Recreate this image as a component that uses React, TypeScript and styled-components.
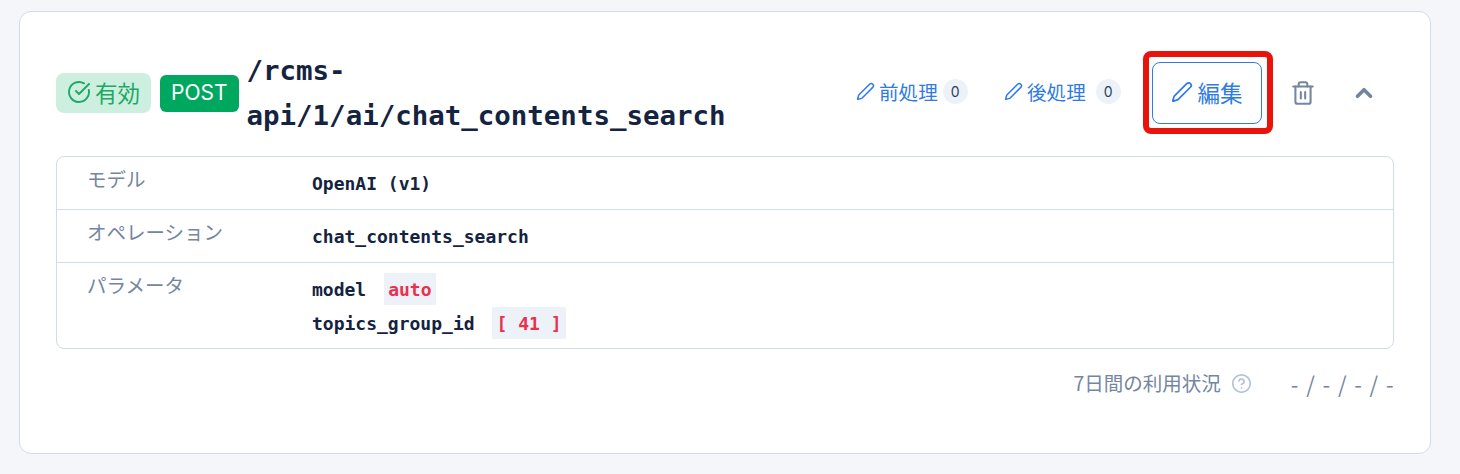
import { FunctionComponent, ReactNode } from "react";
import styled, { createGlobalStyle } from "styled-components";
import { ChevronUp, CircleCheckBig, CircleHelp, Pen, Trash2 } from "lucide-react";

const GlobalStyle = createGlobalStyle`
  html, body {
    margin: 0;
    padding: 0;
    background: #f5f6fa;
    font-family: "Noto Sans CJK JP", "Noto Sans", sans-serif;
  }
`;

const mono = `"DejaVu Sans Mono", "Noto Sans CJK JP", monospace`;

const Page = styled.div`
  width: 1460px;
  height: 474px;
  box-sizing: border-box;
  padding: 11px 29px 20px 19px;
  overflow: hidden;
`;
const Card = styled.section`
  box-sizing: border-box;
  height: 443px;
  background: #fff;
  border: 1px solid #d2dbe9;
  border-radius: 12px;
  padding: 35px 36px 0;
`;
const Header = styled.header`
  display: flex;
  align-items: center;
  height: 92px;
  margin-bottom: 17px;
`;
const StatusBadge = styled.span`
  display: flex;
  align-items: center;
  gap: 4px;
  height: 40px;
  box-sizing: border-box;
  padding: 0 11px 2px;
  border-radius: 8px;
  background: #ccefe0;
  color: #1ea866;
  font-size: 22.5px;
`;
const MethodBadge = styled.span`
  display: flex;
  align-items: center;
  height: 37px;
  box-sizing: border-box;
  margin-left: 9px;
  padding: 0 11px 2px;
  border-radius: 6px;
  background: #00a85f;
  color: #fff;
  font-family: Inter, sans-serif;
  font-size: 21px;
`;
const Title = styled.h2`
  width: 500px;
  margin: 0 0 0 8px;
  color: #14233f;
  font-family: ${mono};
  font-size: 27.45px;
  font-weight: 600;
  line-height: 45px;
`;
const Actions = styled.div`
  display: flex;
  align-items: center;
  margin-left: auto;
  padding-right: 17px;
`;
const TextAction = styled.button`
  display: flex;
  align-items: center;
  gap: 4px;
  width: 148px;
  padding: 0 0 3px;
  border: 0;
  background: none;
  color: #2f7ae5;
  font-family: inherit;
  font-size: 19.6px;
`;
const Count = styled.span<{ $gap: number }>`
  display: flex;
  align-items: center;
  justify-content: center;
  width: 25px;
  height: 25px;
  margin-left: ${(p) => p.$gap}px;
  border-radius: 50%;
  background: #edf2f9;
  color: #2c3e5a;
  font-family: Inter, sans-serif;
  font-size: 14px;
`;
const EditButton = styled.button`
  position: relative;
  display: flex;
  align-items: center;
  justify-content: center;
  gap: 4px;
  width: 110px;
  height: 62px;
  padding: 0 0 3px;
  border: 1px solid #2f7ae5;
  border-radius: 8px;
  background: #fff;
  color: #2f7ae5;
  font-family: inherit;
  font-size: 22.5px;
`;
const Highlight = styled.span`
  position: absolute;
  inset: -12px -12px -11px -10px;
  box-sizing: border-box;
  border: 6px solid #e8140c;
  border-radius: 8px;
`;
const IconButton = styled.button<{ $gap: number }>`
  display: flex;
  align-items: center;
  padding: 0;
  border: 0;
  background: none;
  color: #74869f;
  margin-left: ${(p) => p.$gap}px;
`;
const Table = styled.div`
  border: 1px solid #d2dbe9;
  border-radius: 8px;
`;
const Row = styled.div`
  display: grid;
  grid-template-columns: 255px 1fr;
  padding: 10px 0;
  & + & {
    border-top: 1px solid #d2dbe9;
  }
  &:last-child {
    padding-bottom: 9px;
  }
`;
const Label = styled.div`
  padding-left: 30px;
  color: #74869f;
  font-size: 19.5px;
  line-height: 24px;
`;
const Value = styled.div`
  display: flex;
  flex-direction: column;
  gap: 2px;
  color: #14233f;
  font-family: ${mono};
  font-size: 18px;
  font-weight: 600;
`;
const Line = styled.div`
  display: flex;
  align-items: flex-start;
  gap: 17.5px;
  height: 32px;
  line-height: 34px;
`;
const Code = styled.code`
  display: block;
  height: 32px;
  padding: 0 4.5px;
  background: #edf1f8;
  color: #e8304f;
  font-family: ${mono};
  font-size: 18px;
  line-height: 34px;
`;
const Footer = styled.footer`
  display: flex;
  align-items: center;
  justify-content: flex-end;
  margin-top: 20px;
  color: #74869f;
  font-size: 19.5px;
  line-height: 28px;
`;
const Help = styled.span`
  display: flex;
  margin-left: 10px;
  color: #b4c3dc;
`;
const Usage = styled.span`
  margin-left: 39px;
  margin-right: -1px;
  font-size: 22px;
  letter-spacing: 1.4px;
`;

type ActionProps = { label: string; count: number; gap: number };

const Action: FunctionComponent<ActionProps> = ({ label, count, gap }) => (
  <TextAction>
    <Pen size={19} strokeWidth={1.9} />
    {label}
    <Count $gap={gap}>{count}</Count>
  </TextAction>
);

const InfoRow: FunctionComponent<{ label: string; children: ReactNode }> = ({ label, children }) => (
  <Row>
    <Label>{label}</Label>
    <Value>{children}</Value>
  </Row>
);

const App: FunctionComponent = () => (
  <Page>
    <GlobalStyle />
    <Card>
      <Header>
        <StatusBadge>
          <CircleCheckBig size={24} strokeWidth={1.9} />
          有効
        </StatusBadge>
        <MethodBadge>POST</MethodBadge>
        <Title>/rcms-api/1/ai/chat_contents_search</Title>
        <Actions>
          <Action label="前処理" count={0} gap={1} />
          <Action label="後処理" count={0} gap={6} />
          <EditButton>
            <Pen size={22} strokeWidth={1.9} />
            編集
            <Highlight />
          </EditButton>
          <IconButton $gap={28}>
            <Trash2 size={26} strokeWidth={1.9} />
          </IconButton>
          <IconButton $gap={35}>
            <ChevronUp size={26} strokeWidth={3.4} />
          </IconButton>
        </Actions>
      </Header>
      <Table>
        <InfoRow label="モデル">
          <Line>OpenAI (v1)</Line>
        </InfoRow>
        <InfoRow label="オペレーション">
          <Line>chat_contents_search</Line>
        </InfoRow>
        <InfoRow label="パラメータ">
          <Line>
            model
            <Code>auto</Code>
          </Line>
          <Line>
            topics_group_id
            <Code>[ 41 ]</Code>
          </Line>
        </InfoRow>
      </Table>
      <Footer>
        7日間の利用状況
        <Help>
          <CircleHelp size={21} strokeWidth={2} />
        </Help>
        <Usage>- / - / - / -</Usage>
      </Footer>
    </Card>
  </Page>
);

export default App;
